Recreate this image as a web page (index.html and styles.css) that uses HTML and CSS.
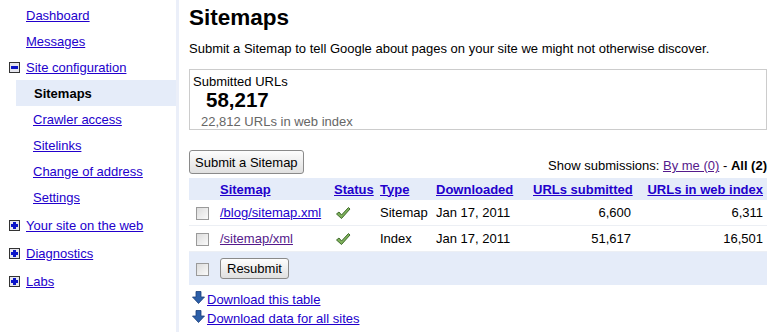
FILE: index.html
```html
<!DOCTYPE html>
<html>
<head>
<meta charset="utf-8">
<link rel="stylesheet" href="styles.css">
</head>
<body>
<div class="page">
  <nav class="side">
    <div class="item top"><a href="#">Dashboard</a></div>
    <div class="item top"><a href="#">Messages</a></div>
    <div class="item top ic"><span class="tog"><svg width="11" height="11" viewBox="0 0 11 11"><rect x="0.5" y="0.5" width="10" height="10" fill="#e6e6ee" stroke="#333"/><rect x="2" y="4" width="7" height="3" fill="#0a14c8"/></svg></span><a href="#">Site configuration</a></div>
    <div class="item sub cur">Sitemaps</div>
    <div class="item sub"><a href="#">Crawler access</a></div>
    <div class="item sub"><a href="#">Sitelinks</a></div>
    <div class="item sub"><a href="#">Change of address</a></div>
    <div class="item sub"><a href="#">Settings</a></div>
    <div class="item plus ic first-plus"><span class="tog"><svg width="11" height="11" viewBox="0 0 11 11"><rect x="0.5" y="0.5" width="10" height="10" fill="#e6e6ee" stroke="#333"/><rect x="2" y="4" width="7" height="3" fill="#0a14c8"/><rect x="4" y="2" width="3" height="7" fill="#0a14c8"/></svg></span><a href="#">Your site on the web</a></div>
    <div class="item plus ic"><span class="tog"><svg width="11" height="11" viewBox="0 0 11 11"><rect x="0.5" y="0.5" width="10" height="10" fill="#e6e6ee" stroke="#333"/><rect x="2" y="4" width="7" height="3" fill="#0a14c8"/><rect x="4" y="2" width="3" height="7" fill="#0a14c8"/></svg></span><a href="#">Diagnostics</a></div>
    <div class="item plus ic"><span class="tog"><svg width="11" height="11" viewBox="0 0 11 11"><rect x="0.5" y="0.5" width="10" height="10" fill="#e6e6ee" stroke="#333"/><rect x="2" y="4" width="7" height="3" fill="#0a14c8"/><rect x="4" y="2" width="3" height="7" fill="#0a14c8"/></svg></span><a href="#">Labs</a></div>
  </nav>
  <main class="main">
    <h1 class="title">Sitemaps</h1>
    <p class="intro">Submit a Sitemap to tell Google about pages on your site we might not otherwise discover.</p>
    <div class="stats">
      <div class="stat-label">Submitted URLs</div>
      <div class="stat-num">58,217</div>
      <div class="stat-sub">22,812 URLs in web index</div>
    </div>
    <div class="toolbar">
      <button class="btn">Submit a Sitemap</button>
      <div class="filter">Show submissions: <a href="#" class="visited">By me (0)</a> - <b>All (2)</b></div>
    </div>
    <table class="grid">
      <colgroup>
        <col class="c-cb"><col class="c-map"><col class="c-st"><col class="c-ty"><col class="c-dl"><col class="c-sub"><col class="c-idx">
      </colgroup>
      <thead>
        <tr>
          <th></th>
          <th><a href="#">Sitemap</a></th>
          <th><a href="#">Status</a></th>
          <th><a href="#">Type</a></th>
          <th><a href="#">Downloaded</a></th>
          <th class="r"><a href="#">URLs submitted</a></th>
          <th class="r"><a href="#">URLs in web index</a></th>
        </tr>
      </thead>
      <tbody>
        <tr>
          <td><span class="cb"></span></td>
          <td><a href="#">/blog/sitemap.xml</a></td>
          <td><svg class="ok" width="16" height="14" viewBox="0 0 16 14"><path d="M1.5 8 L4 6 L6.5 9 L13.5 1.5 L15 3 L6.5 12.5 Z" fill="#7fb15c" stroke="#3f6b2b" stroke-width="1" stroke-linejoin="round"/></svg></td>
          <td>Sitemap</td>
          <td>Jan 17, 2011</td>
          <td class="r">6,600</td>
          <td class="r">6,311</td>
        </tr>
        <tr>
          <td><span class="cb"></span></td>
          <td><a href="#" class="visited">/sitemap/xml</a></td>
          <td><svg class="ok" width="16" height="14" viewBox="0 0 16 14"><path d="M1.5 8 L4 6 L6.5 9 L13.5 1.5 L15 3 L6.5 12.5 Z" fill="#7fb15c" stroke="#3f6b2b" stroke-width="1" stroke-linejoin="round"/></svg></td>
          <td>Index</td>
          <td>Jan 17, 2011</td>
          <td class="r">51,617</td>
          <td class="r">16,501</td>
        </tr>
      </tbody>
      <tfoot>
        <tr>
          <td><span class="cb"></span></td>
          <td colspan="6"><button class="btn small">Resubmit</button></td>
        </tr>
      </tfoot>
    </table>
    <div class="downloads">
      <div class="dl"><svg width="13" height="13" viewBox="0 0 13 13"><path d="M4 0.5 H9 V6 H12.5 L6.5 12.5 L0.5 6 H4 Z" fill="#2c5fa8" stroke="#1a3d78" stroke-width="0.8"/></svg><a href="#">Download this table</a></div>
      <div class="dl"><svg width="13" height="13" viewBox="0 0 13 13"><path d="M4 0.5 H9 V6 H12.5 L6.5 12.5 L0.5 6 H4 Z" fill="#2c5fa8" stroke="#1a3d78" stroke-width="0.8"/></svg><a href="#">Download data for all sites</a></div>
    </div>
  </main>
</div>
</body>
</html>
```

FILE: styles.css
```css
html, body {
  margin: 0;
  padding: 0;
  background: #fff;
}
body {
  font-family: "Liberation Sans", Arial, sans-serif;
  font-size: 13px;
  color: #000;
}
a {
  color: #2200cc;
  text-decoration: underline;
}
a.visited {
  color: #551a8b;
}
.page {
  display: flex;
  align-items: stretch;
  min-height: 332px;
}
.side {
  width: 176px;
  border-right: 3px solid #ebeff9;
  padding-top: 2px;
  flex: none;
}
.item {
  display: flex;
  align-items: center;
  height: 26px;
}
.item.top {
  padding-left: 26px;
}
.item.ic {
  padding-left: 9px;
}
.tog {
  display: inline-flex;
  width: 11px;
  height: 11px;
  margin-right: 6px;
}
.item.sub {
  margin-left: 16px;
  padding-left: 17px;
}
.item.cur {
  background: #e5ecf9;
  font-weight: bold;
  padding-left: 18px;
}
.item.plus {
  height: 28px;
}
.item.first-plus {
  margin-top: 1px;
}
.main {
  flex: 1;
  padding: 0 9px 0 10px;
}
.title {
  font-size: 22.5px;
  font-weight: bold;
  margin: 5px 0 0 0;
  line-height: 26px;
}
.intro {
  margin: 10px 0 0 0;
  line-height: 16px;
}
.stats {
  margin-top: 12px;
  border: 1px solid #cccccc;
  padding: 4px 4px 0 3px;
  height: 55px;
}
.stat-label {
  line-height: 15px;
}
.stat-num {
  font-size: 20.5px;
  font-weight: bold;
  padding-left: 13px;
  line-height: 22px;
}
.stat-sub {
  color: #666;
  padding-left: 8px;
  padding-top: 3px;
  line-height: 16px;
}
.toolbar {
  display: flex;
  justify-content: space-between;
  align-items: flex-end;
  margin-top: 20px;
}
.btn {
  font-family: "Liberation Sans", Arial, sans-serif;
  font-size: 13px;
  color: #000;
  background: linear-gradient(#fdfdfd, #e0e0e0);
  border: 1px solid #8a8a8a;
  border-radius: 3px;
  height: 24px;
  padding: 0 5px;
  margin: 0;
}
.btn.small {
  height: 21px;
  padding: 0 6px;
}
.filter {
  line-height: 16px;
}
.grid {
  width: 100%;
  border-collapse: collapse;
  table-layout: fixed;
  margin-top: 4px;
}
.c-cb { width: 27px; }
.c-map { width: 114px; }
.c-st { width: 46px; }
.c-ty { width: 56px; }
.c-dl { width: 97px; }
.c-sub { width: 106px; }
.c-idx { width: auto; }
.grid th, .grid td {
  padding: 0 4px;
  text-align: left;
  white-space: nowrap;
}
.grid th {
  background: #e5ecf9;
  height: 22px;
  font-weight: bold;
}
.grid tbody td {
  height: 25px;
  border-bottom: 1px solid #eceff4;
}
.grid .r {
  text-align: right;
}
.grid tfoot td {
  background: #e5ecf9;
  height: 33px;
}
.cb {
  display: inline-block;
  width: 11px;
  height: 11px;
  border: 1px solid #9a9a9a;
  background: linear-gradient(135deg, #dcdcdc, #fafafa);
  vertical-align: middle;
  margin-left: 3px;
}
.ok {
  display: block;
  margin-left: 1px;
}
.downloads {
  margin-top: 5px;
}
.dl {
  display: flex;
  align-items: center;
  line-height: 19px;
  padding-left: 3px;
}
.dl svg {
  margin-right: 2px;
  margin-top: -4px;
}
```
